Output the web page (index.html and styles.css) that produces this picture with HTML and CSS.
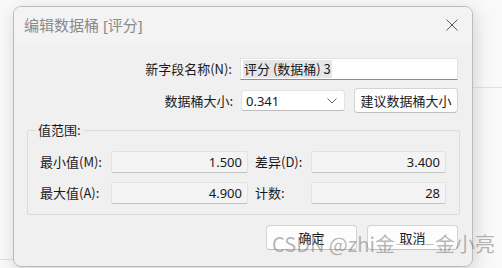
FILE: index.html
```html
<!DOCTYPE html>
<html lang="zh-CN">
<head>
<meta charset="utf-8">
<title>编辑数据桶</title>
<link rel="stylesheet" href="styles.css">
</head>
<body>
<div class="bg-line bg-line-right"></div>
<div class="bg-line bg-line-left"></div>
<div class="dialog">
  <div class="titlebar">
    <span class="title">编辑数据桶 [评分]</span>
    <span class="close">
      <svg width="12" height="12" viewBox="0 0 12 12"><path d="M0.5 0.5 L11.5 11.5 M11.5 0.5 L0.5 11.5" stroke="#5a5a5a" stroke-width="1" fill="none"/></svg>
    </span>
  </div>
  <div class="content">
    <div class="row">
      <label class="lbl">新字段名称(N):</label>
      <div class="input"><span class="sel">评分 (数据桶) 3</span></div>
    </div>
    <div class="row row2">
      <label class="lbl">数据桶大小:</label>
      <div class="select">
        <span>0.341</span>
        <svg width="10" height="6" viewBox="0 0 10 6"><polyline points="0.5,0.5 5,5 9.5,0.5" stroke="#606060" stroke-width="1" fill="none"/></svg>
      </div>
      <button class="btn btn-suggest">建议数据桶大小</button>
    </div>
    <fieldset class="group">
      <legend>值范围:</legend>
      <div class="grid">
        <span class="glbl">最小值(M):</span>
        <div class="field">1.500</div>
        <span class="glbl glbl2">差异(D):</span>
        <div class="field">3.400</div>
        <span class="glbl">最大值(A):</span>
        <div class="field">4.900</div>
        <span class="glbl glbl2">计数:</span>
        <div class="field">28</div>
      </div>
    </fieldset>
    <div class="buttons">
      <button class="btn btn-main">确定</button>
      <button class="btn btn-main">取消</button>
    </div>
  </div>
</div>
<div class="watermark">CSDN @zhi金——金小亮</div>
</body>
</html>
```
FILE: styles.css
```css
html, body {
  margin: 0;
  padding: 0;
}
body {
  width: 502px;
  height: 268px;
  overflow: hidden;
  position: relative;
  background: #f9f9f9;
  font-family: "Noto Sans", "Noto Sans CJK SC", sans-serif;
  font-size: 13px;
  color: #1a1a1a;
}
.bg-line {
  position: absolute;
  height: 1px;
  background: #e2e2e2;
}
.bg-line-right {
  left: 472px;
  right: 0;
  top: 87px;
}
.bg-line-left {
  left: 0;
  width: 14px;
  top: 259px;
}
.dialog {
  position: relative;
  margin: 6px 0 0 13px;
  width: 460px;
  height: 261px;
  box-sizing: border-box;
  border: 1px solid #bcbcbc;
  border-radius: 8px;
  background: #f0f0f0;
  box-shadow: 2px 4px 18px rgba(0, 0, 0, 0.16);
  overflow: hidden;
}
.titlebar {
  height: 37px;
  background: #f3f3f3;
  display: flex;
  align-items: center;
  justify-content: space-between;
  padding: 0 14px 0 10px;
}
.title {
  font-family: "Noto Sans", "Noto Sans CJK SC", sans-serif;
  font-size: 15px;
  color: #8a8a8a;
  padding-bottom: 3px;
}
.close {
  display: flex;
  width: 12px;
  height: 12px;
  margin-bottom: 2px;
}
.content {
  padding: 14px 14px 0 14px;
}
.row {
  display: flex;
  justify-content: flex-end;
  align-items: center;
  height: 22px;
}
.lbl {
  font-family: "Noto Sans CJK SC", sans-serif;
  margin-right: 8px;
  line-height: 16px;
}
.input {
  width: 218px;
  height: 22px;
  box-sizing: border-box;
  background: #ffffff;
  border: 1px solid #e3e3e3;
  border-bottom-color: #8c8c8c;
  display: flex;
  align-items: center;
  padding-left: 2px;
}
.sel {
  font-family: "Noto Sans CJK SC", sans-serif;
  background: #e6e6e6;
  line-height: 18px;
  padding: 0 1px;
}
.row2 {
  margin-top: 8px;
  height: 25px;
}
.select {
  width: 104px;
  height: 21px;
  box-sizing: border-box;
  background: #ffffff;
  border: 1px solid #e3e3e3;
  border-bottom-color: #bdbdbd;
  border-radius: 3px;
  display: flex;
  align-items: center;
  justify-content: space-between;
  padding: 0 7px 0 4px;
}
.btn {
  font-family: "Noto Sans CJK SC", sans-serif;
  font-size: 13px;
  color: #1a1a1a;
  background: #fdfdfd;
  border: 1px solid #d4d4d4;
  border-bottom-color: #bfbfbf;
  border-radius: 4px;
  padding: 0;
  box-sizing: border-box;
}
.btn-suggest {
  width: 104px;
  height: 25px;
  margin-left: 9px;
}
.group {
  margin: 9px -2px 0 -1px;
  width: 433px;
  box-sizing: border-box;
  border: 1px solid #dcdcdc;
  border-radius: 2px;
  padding: 0 0 10px 12px;
}
.group legend {
  font-family: "Noto Sans CJK SC", sans-serif;
  margin-left: -4px;
  padding: 0 2px;
  line-height: 16px;
}
.grid {
  display: grid;
  grid-template-columns: 71px 137px 63px 135px;
  grid-auto-rows: 22px;
  row-gap: 9px;
  align-items: center;
  margin-top: 13px;
}
.glbl {
  font-family: "Noto Sans CJK SC", sans-serif;
  line-height: 16px;
}
.glbl2 {
  padding-left: 7px;
}
.field {
  height: 22px;
  box-sizing: border-box;
  background: #f3f3f3;
  border: 1px solid #e2e2e2;
  border-bottom-color: #c2c2c2;
  border-radius: 2px;
  text-align: right;
  padding-right: 5px;
  line-height: 20px;
}
.buttons {
  display: flex;
  justify-content: flex-end;
  gap: 10px;
  margin-top: 10px;
}
.btn-main {
  width: 91px;
  height: 25px;
}
.watermark {
  position: absolute;
  left: 272px;
  top: 232px;
  font-family: "Noto Sans CJK SC", sans-serif;
  font-size: 20px;
  line-height: 24px;
  color: rgba(120, 120, 120, 0.55);
  white-space: nowrap;
}
```
